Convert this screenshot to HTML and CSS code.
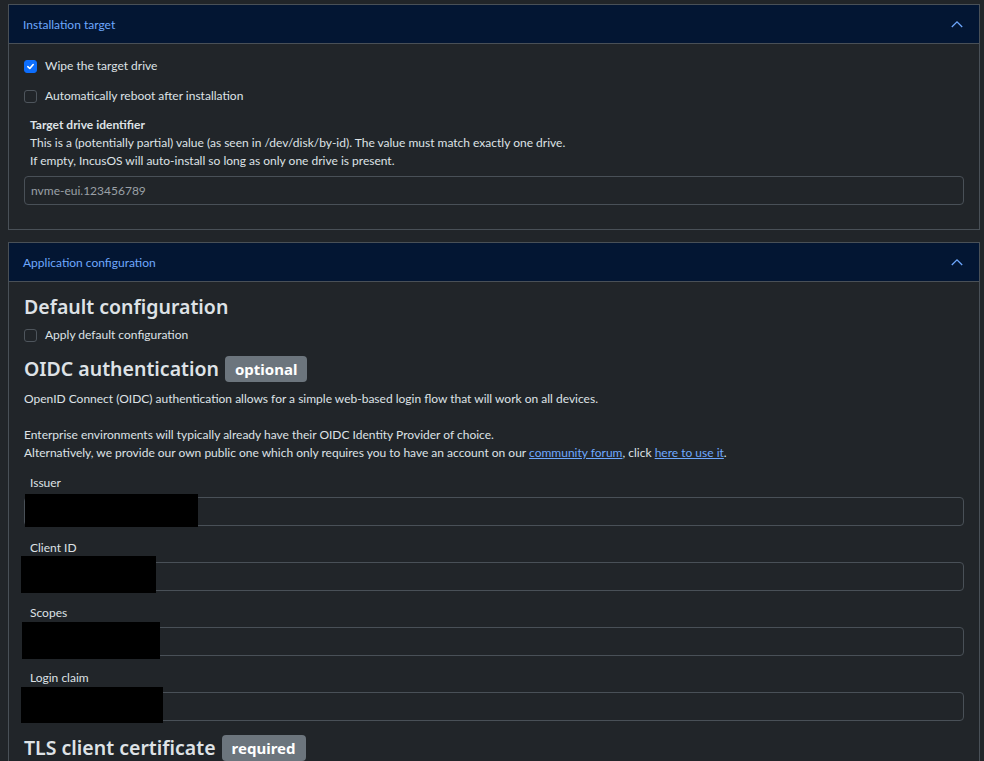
FILE: index.html
```html
<!DOCTYPE html>
<html lang="en">
<head>
<meta charset="utf-8">
<title>IncusOS configuration</title>
<link rel="stylesheet" href="styles.css">
</head>
<body>
<section class="card">
  <div class="card-header">
    <span>Installation target</span>
    <svg class="chev" width="12" height="8" viewBox="0 0 12 8"><polyline points="0.8,7 6,1.8 11.2,7" fill="none" stroke="#6ea8fe" stroke-width="1.3"/></svg>
  </div>
  <div class="card-body body-1">
    <label class="check first"><span class="box checked"><svg width="9" height="9" viewBox="0 0 10 10"><polyline points="2,5.2 4.2,7.2 8,2.8" fill="none" stroke="#fff" stroke-width="1.8" stroke-linecap="round" stroke-linejoin="round"/></svg></span>Wipe the target drive</label>
    <label class="check second"><span class="box"></span>Automatically reboot after installation</label>
    <div class="field-title">Target drive identifier</div>
    <div class="desc">This is a (potentially partial) value (as seen in /dev/disk/by-id). The value must match exactly one drive.<br>If empty, IncusOS will auto-install so long as only one drive is present.</div>
    <div class="input placeholder">nvme-eui.123456789</div>
  </div>
</section>

<section class="card card-2">
  <div class="card-header">
    <span>Application configuration</span>
    <svg class="chev" width="12" height="8" viewBox="0 0 12 8"><polyline points="0.8,7 6,1.8 11.2,7" fill="none" stroke="#6ea8fe" stroke-width="1.3"/></svg>
  </div>
  <div class="card-body body-2">
    <h2 class="h-default">Default configuration</h2>
    <label class="check apply"><span class="box"></span>Apply default configuration</label>
    <h2 class="h-badge">OIDC authentication <span class="badge">optional</span></h2>
    <p class="para">OpenID Connect (OIDC) authentication allows for a simple web-based login flow that will work on all devices.<br><br>Enterprise environments will typically already have their OIDC Identity Provider of choice.<br>Alternatively, we provide our own public one which only requires you to have an account on our <a href="#">community forum</a>, click <a href="#">here to use it</a>.</p>

    <div class="field first-field">
      <div class="label">Issuer</div>
      <div class="input"></div>
      <div class="redact r-issuer"></div>
    </div>
    <div class="field">
      <div class="label">Client ID</div>
      <div class="input"></div>
      <div class="redact r-client"></div>
    </div>
    <div class="field">
      <div class="label">Scopes</div>
      <div class="input"></div>
      <div class="redact r-scopes"></div>
    </div>
    <div class="field">
      <div class="label">Login claim</div>
      <div class="input"></div>
      <div class="redact r-login"></div>
    </div>
    <h2 class="h-badge h-tls">TLS client certificate <span class="badge">required</span></h2>
  </div>
</section>
</body>
</html>
```

FILE: styles.css
```css
html, body {
  background: #212529;
}
body {
  margin: 4px 4px 0 8px;
  height: 757px;
  overflow: hidden;
  font-family: "Lato", "Noto Sans", sans-serif;
  font-size: 12px;
  line-height: 18px;
  color: #dee2e6;
}
.card {
  border: 1px solid #495057;
}
.card-2 {
  margin-top: 12px;
}
.card-header {
  height: 37px;
  padding: 1px 16px 0 14px;
  background: #031633;
  border-bottom: 1px solid #495057;
  color: #6ea8fe;
  display: flex;
  align-items: center;
  justify-content: space-between;
}
.chev {
  display: block;
  margin-top: -2px;
}
.card-body {
  padding: 0 15px 0 15px;
}
.body-1 {
  padding-top: 13px;
  padding-bottom: 24px;
}
.check {
  display: flex;
  align-items: center;
  height: 18px;
  gap: 8px;
}
.check.second {
  margin-top: 12px;
}
.box {
  width: 11px;
  height: 11px;
  border: 1px solid #4e555c;
  border-radius: 3px;
  background: #212529;
  display: flex;
  align-items: center;
  justify-content: center;
}
.box.checked {
  background: #0d6efd;
  border-color: #0d6efd;
}
.field-title {
  margin-top: 11px;
  padding-left: 6px;
  font-weight: 700;
}
.desc {
  padding-left: 6px;
}
.input {
  margin-top: 6px;
  height: 27px;
  border: 1px solid #495057;
  border-radius: 4px;
  background: #212529;
  display: flex;
  align-items: center;
  padding-left: 6px;
}
.placeholder {
  color: #9aa0a6;
}
.body-2 {
  padding-top: 13px;
}
h2 {
  margin: 0;
  font-family: "Noto Sans", sans-serif;
  font-size: 19.5px;
  font-weight: 600;
  line-height: 24px;
  color: #dee2e6;
}
.check.apply {
  margin-top: 7px;
}
.h-badge {
  margin-top: 11px;
  height: 28px;
  line-height: 28px;
  display: flex;
  align-items: center;
  gap: 6px;
}
.badge {
  font-family: "Noto Sans", sans-serif;
  background: #6c757d;
  color: #fff;
  font-size: 15px;
  font-weight: 700;
  height: 26px;
  line-height: 26px;
  padding: 0 10px;
  border-radius: 4px;
}
.para {
  margin: 7px 0 0 0;
}
a {
  color: #6ea8fe;
  text-decoration: underline;
}
.field {
  position: relative;
  margin-top: 13px;
}
.field.first-field {
  margin-top: 12px;
}
.label {
  padding-left: 6px;
}
.field .input {
  margin-top: 5px;
}
.redact {
  position: absolute;
  background: #000;
}
.r-issuer { left: 1px; top: 20px; width: 173px; height: 33px; }
.r-client { left: -3px; top: 17px; width: 135px; height: 37px; }
.r-scopes { left: -2px; top: 18px; width: 138px; height: 37px; }
.r-login { left: -3px; top: 18px; width: 142px; height: 36px; }
.h-tls {
  margin-top: 13px;
}
```
